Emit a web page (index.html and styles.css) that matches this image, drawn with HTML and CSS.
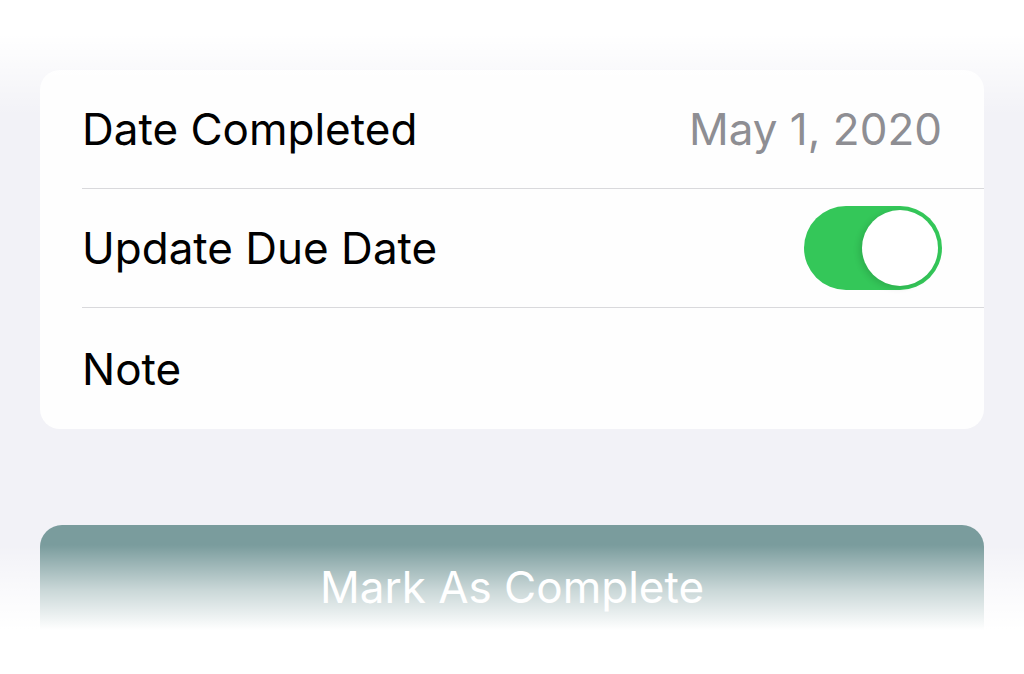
FILE: index.html
```html
<!DOCTYPE html>
<html lang="en">
<head>
    <meta charset="UTF-8">
    <meta name="viewport" content="width=device-width, initial-scale=1.0">
    <title>Mark As Complete</title>
    <link rel="stylesheet" href="styles.css">
</head>
<body>
    <div class="fade-top"></div>

    <div class="card">
        <div class="row">
            <span class="label">Date Completed</span>
            <span class="value">May 1, 2020</span>
        </div>
        <div class="row">
            <span class="label">Update Due Date</span>
            <span class="toggle on"><span class="knob"></span></span>
        </div>
        <div class="row last">
            <span class="label">Note</span>
        </div>
    </div>

    <button class="complete-btn">Mark As Complete</button>

    <div class="fade-bottom"></div>
</body>
</html>
```

FILE: styles.css
```css
body {
    margin: 0;
    padding: 70px 40px 0;
    background: #f2f2f7;
    font-family: Inter, "Noto Sans", sans-serif;
    height: 674px;
    box-sizing: border-box;
    overflow: hidden;
    position: relative;
}
.fade-top {
    position: absolute;
    left: 0;
    right: 0;
    top: 0;
    height: 120px;
    background: linear-gradient(#fff 0, #fff 35px, rgba(255,255,255,0) 115px);
    pointer-events: none;
}
.fade-bottom {
    position: absolute;
    left: 0;
    right: 0;
    top: 545px;
    bottom: 0;
    background: linear-gradient(rgba(255,255,255,0) 0, rgba(255,255,255,0.6) 45px, #fff 85px);
    pointer-events: none;
}
.card {
    background: #fefefe;
    border-radius: 20px;
    overflow: hidden;
}
.row {
    display: flex;
    align-items: center;
    justify-content: space-between;
    height: 118px;
    margin-left: 42px;
    padding-right: 42px;
    border-bottom: 1px solid #d9d9dc;
}
.row.last { border-bottom: none; height: 121px; }
.label {
    font-size: 44px;
    color: #000;
}
.value {
    font-size: 44px;
    color: #8e8e93;
}
.toggle {
    width: 138px;
    height: 84px;
    border-radius: 42px;
    background: #e5e5ea;
    display: flex;
    align-items: center;
    padding: 4px;
    box-sizing: border-box;
}
.toggle.on {
    background: #34c759;
    justify-content: flex-end;
}
.knob {
    width: 76px;
    height: 76px;
    border-radius: 50%;
    background: #fff;
    box-shadow: -3px 2px 6px rgba(0,0,0,0.12);
}
.complete-btn {
    display: block;
    width: 100%;
    height: 124px;
    margin-top: 96px;
    border: none;
    border-radius: 22px;
    background: #7a9c9d;
    color: #fff;
    font-family: Inter, "Noto Sans", sans-serif;
    font-size: 44px;
    padding: 0;
}
```
